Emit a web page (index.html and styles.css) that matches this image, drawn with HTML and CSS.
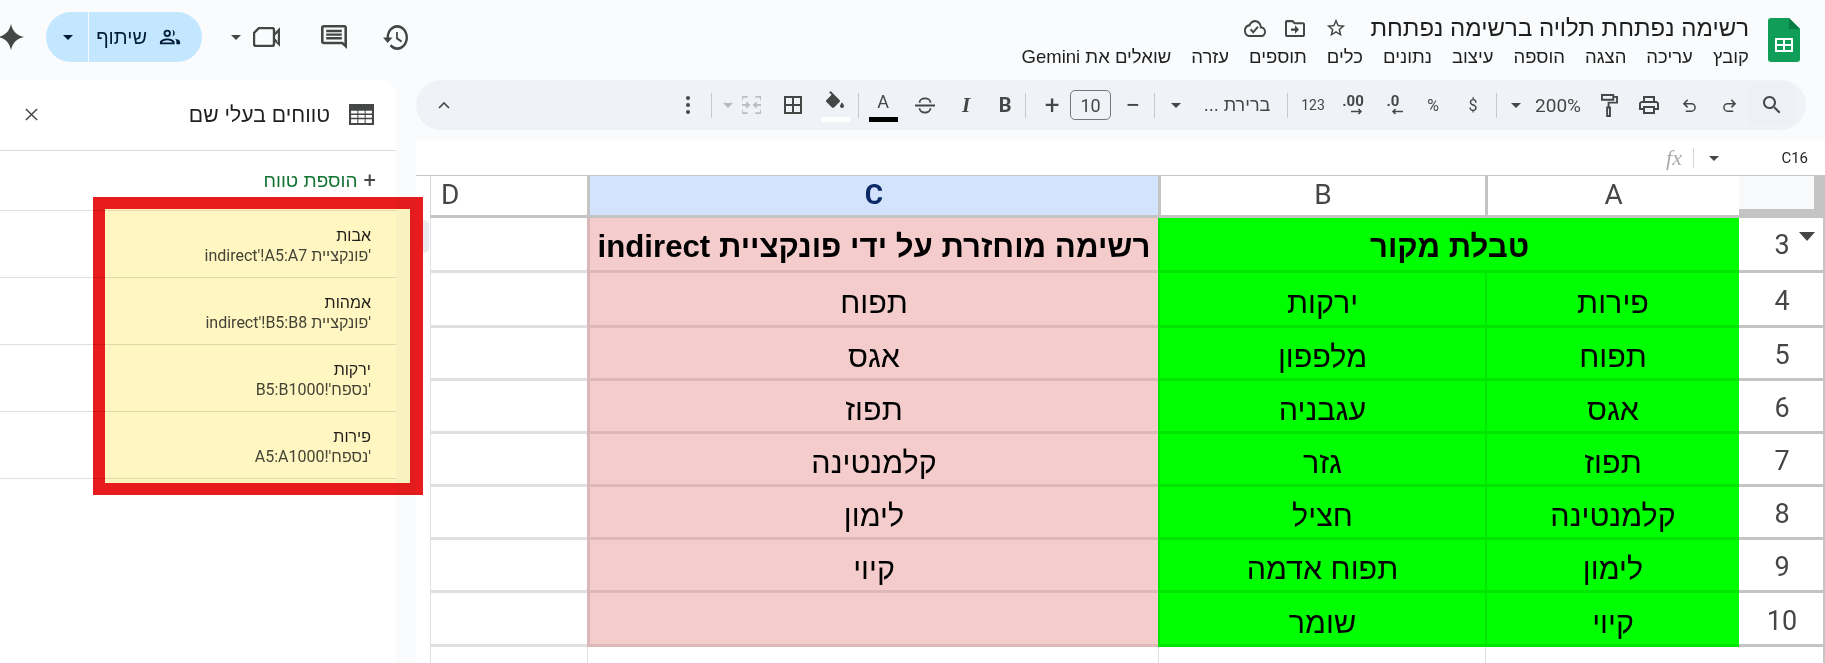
FILE: index.html
```html
<!DOCTYPE html>
<html lang="he" dir="rtl">
<head>
<meta charset="utf-8">
<title>רשימה נפתחת תלויה ברשימה נפתחת</title>
<link rel="stylesheet" href="styles.css">
</head>
<body>
<header class="topbar">
  <svg class="logo" viewBox="0 0 32 44" preserveAspectRatio="none"><path d="M3 0h18l11 11v30a3 3 0 0 1-3 3H3a3 3 0 0 1-3-3V3a3 3 0 0 1 3-3z" fill="#0f9d58"/><path d="M21 0l11 11H21z" fill="#0a7d45"/><path d="M7 20h18v14H7z" fill="#fff"/><path d="M9 22h6v4H9zM17 22h6v4h-6zM9 28h6v4H9zM17 28h6v4h-6z" fill="#0f9d58"/></svg>
  <div class="doc">
    <div class="titlerow">
      <h1 class="title">רשימה נפתחת תלויה ברשימה נפתחת</h1>
      <svg class="ic ic-star" viewBox="0 0 24 24"><path d="M22 9.24l-7.19-.62L12 2 9.19 8.63 2 9.24l5.46 4.73L5.82 21 12 17.27 18.18 21l-1.63-7.03L22 9.24zM12 15.4l-3.76 2.27 1-4.28-3.32-2.88 4.38-.38L12 6.1l1.71 4.04 4.38.38-3.32 2.88 1 4.28L12 15.4z"/></svg>
      <svg class="ic ic-folder" viewBox="2 4 20 16" preserveAspectRatio="none"><path d="M20 6h-8l-2-2H4c-1.1 0-2 .9-2 2v12c0 1.1.9 2 2 2h16c1.1 0 2-.9 2-2V8c0-1.1-.9-2-2-2zm0 12H4V6h5.17l2 2H20v10zm-8-4H8v-2h4V9l4 4-4 4v-3z"/></svg>
      <svg class="ic ic-cloud" viewBox="0 4 24 16" preserveAspectRatio="none"><path d="M19.35 10.04C18.67 6.59 15.64 4 12 4 9.11 4 6.6 5.64 5.35 8.04 2.34 8.36 0 10.91 0 14c0 3.31 2.69 6 6 6h13c2.76 0 5-2.24 5-5 0-2.64-2.05-4.78-4.65-4.96zM19 18H6c-2.21 0-4-1.79-4-4s1.79-4 4-4h.71C7.37 7.69 9.48 6 12 6c3.04 0 5.5 2.46 5.5 5.5v.5H19c1.66 0 3 1.34 3 3s-1.34 3-3 3zm-9-3.82l-2.09-2.09L6.5 13.5 10 17l6.01-6.01-1.41-1.41z"/></svg>
    </div>
    <nav class="menu">
      <span>קובץ</span><span>עריכה</span><span>הצגה</span><span>הוספה</span><span>עיצוב</span><span>נתונים</span><span>כלים</span><span>תוספים</span><span>עזרה</span><span>שואלים את Gemini</span>
    </nav>
  </div>
  <div class="actions">
    <svg class="ic ic-history" viewBox="1 3 21 18" preserveAspectRatio="none"><path d="M13 3c-4.97 0-9 4.03-9 9H1l3.89 3.89.07.14L9 12H6c0-3.87 3.13-7 7-7s7 3.13 7 7-3.13 7-7 7c-1.93 0-3.68-.79-4.94-2.06l-1.42 1.42C8.27 19.99 10.51 21 13 21c4.97 0 9-4.03 9-9s-4.03-9-9-9zm-1 5v5l4.28 2.54.72-1.21-3.5-2.08V8H12z"/></svg>
    <svg class="ic ic-comment" viewBox="2 2 20 20" preserveAspectRatio="none"><path d="M21.99 4c0-1.1-.89-2-1.99-2H4c-1.1 0-2 .9-2 2v12c0 1.1.9 2 2 2h14l4 4-.01-18zM20 4v13.17L18.83 16H4V4h16zM6 12h12v2H6zm0-3h12v2H6zm0-3h12v2H6z"/></svg>
    <div class="meet">
      <svg class="ic ic-video" viewBox="0 0 27 20" preserveAspectRatio="none"><path d="M6 1h13a2 2 0 0 1 2 2v14a2 2 0 0 1-2 2H3a2 2 0 0 1-2-2V6zM21 8l5-5v14l-5-5" fill="none" stroke="#444746" stroke-width="2.4"/></svg>
      <i class="caret"></i>
    </div>
    <div class="share">
      <div class="share-main">
        <svg class="ic ic-people" viewBox="0 0 24 24"><path d="M9 4a4 4 0 1 1 0 8 4 4 0 0 1 0-8zm0 2a2 2 0 1 0 0 4 2 2 0 0 0 0-4zM14.500 4.200a4 4 0 0 1 0 7.600 6 6 0 0 0 1-3.800 6 6 0 0 0-1-3.800zM9 13.500c3 0 8 1.500 8 4V20H1v-2.500c0-2.500 5-4 8-4zm0 2c-2.500 0-5.500 1.200-6 2.500h12c-.5-1.300-3.500-2.500-6-2.500zM17.500 14c2.500.4 5.500 1.600 5.500 3.500V20h-4v-2.500c0-1.400-.6-2.600-1.500-3.500z"/></svg>
        <span>שיתוף</span>
      </div>
      <div class="share-drop"><i class="caret caret-dark"></i></div>
    </div>
    <svg class="ic ic-spark" viewBox="0 0 24 24" preserveAspectRatio="none"><path d="M12 0c1.500 6.500 5 10.500 12 12-7 1.500-10.500 5.500-12 12-1.500-6.500-5-10.500-12-12 7-1.500 10.500-5.500 12-12z"/></svg>
  </div>
</header>

<main class="main">
  <section class="sheet">
    <div class="toolbar">
      <button class="tb w45 tb-search"><svg class="ti" viewBox="3 3 18 18"><path d="M15.5 14h-.79l-.28-.27C15.41 12.59 16 11.11 16 9.5 16 5.91 13.09 3 9.5 3S3 5.91 3 9.5 5.91 16 9.5 16c1.61 0 3.09-.59 4.23-1.57l.27.28v.79l5 4.99L20.49 19l-4.99-5zm-6 0C7.01 14 5 11.99 5 9.5S7.01 5 9.5 5 14 7.01 14 9.5 11.99 14 9.5 14z"/></svg></button>
      <button class="tb w40"><svg class="ti ti-s" viewBox="0 0 16 16" preserveAspectRatio="none"><path d="M6 2L2 6l4 4M2 6h8a4 4 0 0 1 0 8H4" fill="none" stroke="#444746" stroke-width="1.6" transform="matrix(-1 0 0 1 16 0)"/></svg></button>
      <button class="tb w40"><svg class="ti ti-s" viewBox="0 0 16 16" preserveAspectRatio="none"><path d="M6 2L2 6l4 4M2 6h8a4 4 0 0 1 0 8H4" fill="none" stroke="#444746" stroke-width="1.6"/></svg></button>
      <button class="tb w40"><svg class="ti ti-print" viewBox="2 3 20 18" preserveAspectRatio="none"><path d="M19 8h-1V3H6v5H5c-1.66 0-3 1.34-3 3v6h4v4h12v-4h4v-6c0-1.66-1.34-3-3-3zM8 5h8v3H8V5zm8 12v2H8v-4h8v2zm2-2v-2H6v2H4v-4c0-.55.45-1 1-1h14c.55 0 1 .45 1 1v4h-2z"/></svg></button>
      <button class="tb w40"><svg class="ti ti-paint" viewBox="0 0 18 24" preserveAspectRatio="none"><path d="M1 1h12v5H1zM13 3h4v6H8v5M6.500 14h3v9h-3z" fill="none" stroke="#444746" stroke-width="2"/></svg></button>
      <button class="tb w59 zoomtxt">200%</button>
      <button class="tb w22"><i class="caret"></i></button>
      <i class="sep sep-a"></i>
      <button class="tb w40 txt">$</button>
      <button class="tb w40 txt">%</button>
      <button class="tb w40 dec"><span>.0</span><svg class="arrow" viewBox="0 0 12 7"><path d="M12 3.500H2M4.500 1L2 3.500 4.500 6" fill="none" stroke="#444746" stroke-width="1.5"/></svg></button>
      <button class="tb w40 dec"><span>.00</span><svg class="arrow" viewBox="0 0 12 7"><path d="M0 3.500h10M7.500 1L10 3.500 7.500 6" fill="none" stroke="#444746" stroke-width="1.5"/></svg></button>
      <button class="tb w40 txt small">123</button>
      <i class="sep sep-b"></i>
      <button class="tb fontname">ברירת ...</button>
      <button class="tb w22"><i class="caret"></i></button>
      <i class="sep sep-c"></i>
      <button class="tb w36 sign">−</button>
      <div class="sizebox">10</div>
      <button class="tb w36 sign">+</button>
      <i class="sep sep-d"></i>
      <button class="tb w40 bold">B</button>
      <button class="tb w38 ital">I</button>
      <button class="tb w44"><svg class="ti ti-strike" viewBox="0 0 22 18" preserveAspectRatio="none"><path d="M0 9h22M5 6c0-6 12-6 12 0M5 12c0 6 12 6 12 0" fill="none" stroke="#444746" stroke-width="2"/></svg></button>
      <button class="tb w40 color">
        <span class="a-letter">A</span><i class="bar bar-black"></i>
      </button>
      <i class="sep sep-e"></i>
      <button class="tb w40 color">
        <svg class="ti ti-fill" viewBox="3 0 18 17" preserveAspectRatio="none"><path d="M16.560 8.940L7.620 0 6.210 1.410l2.380 2.380-5.150 5.150c-.59.59-.59 1.540 0 2.120l5.500 5.500c.29.29.68.44 1.060.44s.77-.15 1.060-.44l5.500-5.500c.59-.58.59-1.530 0-2.120zM19 11.500s-2 2.170-2 3.500c0 1.100.9 2 2 2s2-.9 2-2c0-1.330-2-3.500-2-3.500z"/></svg>
        <i class="bar bar-white"></i>
      </button>
      <button class="tb w44"><svg class="ti ti-border" viewBox="3 3 18 18" preserveAspectRatio="none"><path d="M3 3v18h18V3H3zm8 16H5v-6h6v6zm0-8H5V5h6v6zm8 8h-6v-6h6v6zm0-8h-6V5h6v6z"/></svg></button>
      <button class="tb w34"><svg class="ti ti-merge" viewBox="0 0 20 20" preserveAspectRatio="none"><path d="M0 5V1h6M0 15v4h6M20 5V1h-6M20 15v4h-6M0 10h7M4.500 7l3 3-3 3M20 10h-7M15.500 7l-3 3 3 3" fill="none" stroke="#bcbfc2" stroke-width="2"/></svg></button>
      <button class="tb w18"><i class="caret caret-off"></i></button>
      <i class="sep sep-f"></i>
      <button class="tb w40 dots"><i></i><i></i><i></i></button>
      <div class="tb-fill"></div>
      <button class="tb w56"><svg class="ti ti-chev" viewBox="0 0 12 8" preserveAspectRatio="none"><path d="M1 7l5-5 5 5" fill="none" stroke="#444746" stroke-width="1.6"/></svg></button>
    </div>

    <div class="formula">
      <span class="cellref">C16</span>
      <i class="caret caret-f"></i>
      <i class="fsep"></i>
      <span class="fx">fx</span>
    </div>

    <div class="grid">
      <div class="corner"></div>
      <div class="ch">A</div>
      <div class="ch">B</div>
      <div class="ch ch-sel">C</div>
      <div class="ch ch-d">D</div>
      <div class="pad"></div>

      <div class="rh rh-3"><span>3</span><i class="rowcaret"></i></div>
      <div class="c g bold span2">טבלת מקור</div>
      <div class="c p bold">רשימה מוחזרת על ידי פונקציית indirect</div>
      <div class="c e"></div>
      <div class="pad"></div>

      <div class="rh">4</div><div class="c g">פירות</div><div class="c g">ירקות</div><div class="c p">תפוח</div><div class="c e"></div><div class="pad"></div>
      <div class="rh">5</div><div class="c g">תפוח</div><div class="c g">מלפפון</div><div class="c p">אגס</div><div class="c e"></div><div class="pad"></div>
      <div class="rh">6</div><div class="c g">אגס</div><div class="c g">עגבניה</div><div class="c p">תפוז</div><div class="c e"></div><div class="pad"></div>
      <div class="rh">7</div><div class="c g">תפוז</div><div class="c g">גזר</div><div class="c p">קלמנטינה</div><div class="c e"></div><div class="pad"></div>
      <div class="rh">8</div><div class="c g">קלמנטינה</div><div class="c g">חציל</div><div class="c p">לימון</div><div class="c e"></div><div class="pad"></div>
      <div class="rh">9</div><div class="c g">לימון</div><div class="c g">תפוח אדמה</div><div class="c p">קיוי</div><div class="c e"></div><div class="pad"></div>
      <div class="rh">10</div><div class="c g">קיוי</div><div class="c g">שומר</div><div class="c p"></div><div class="c e"></div><div class="pad"></div>
      <div class="rh rh-11">11</div><div class="c e"></div><div class="c e"></div><div class="c e"></div><div class="c e"></div><div class="pad"></div>
    </div>
  </section>

  <aside class="panel">
    <div class="panel-head">
      <svg class="ic ic-table" viewBox="0 0 24 22" preserveAspectRatio="none"><path d="M0 0h24v22H0z" fill="#444746"/><path d="M2 7h6v3H2zM9 7h6v3H9zM16 7h6v3h-6zM2 11.500h6v3H2zM9 11.500h6v3H9zM16 11.500h6v3h-6zM2 16h6v4H2zM9 16h6v4H9zM16 16h6v4h-6z" fill="#fff"/></svg>
      <h2 class="panel-title">טווחים בעלי שם</h2>
      <svg class="ic ic-close" viewBox="0 0 14 14" preserveAspectRatio="none"><path d="M1 1l12 12M13 1L1 13" fill="none" stroke="#444746" stroke-width="1.6"/></svg>
    </div>
    <div class="add"><span class="plus">+</span><span>הוספת טווח</span></div>
    <ul class="ranges">
      <li><strong>אבות</strong><span>'פונקציית indirect'!A5:A7</span></li>
      <li><strong>אמהות</strong><span>'פונקציית indirect'!B5:B8</span></li>
      <li><strong>ירקות</strong><span>'נספח'!B5:B1000</span></li>
      <li><strong>פירות</strong><span>'נספח'!A5:A1000</span></li>
    </ul>
  </aside>
</main>

<div class="thumb"></div>
<div class="callout"></div>
</body>
</html>
```
FILE: styles.css
```css
* { box-sizing: border-box; }
html, body { margin: 0; height: 100%; }
body {
  width: 1825px;
  height: 663px;
  overflow: hidden;
  position: relative;
  background: #f9fbfd;
  color: #1f1f1f;
  font-family: Roboto, "Liberation Sans", sans-serif;
}
h1, h2, ul { margin: 0; padding: 0; font-weight: normal; }
.ic { display: block; fill: #444746; flex: none; }
i { display: block; font-style: normal; }

.topbar { height: 80px; display: flex; align-items: flex-start; padding-right: 25px; }
.logo { width: 32px; height: 44px; margin-top: 18px; flex: none; }
.doc { margin-right: 19px; width: 740px; flex: none; }
.titlerow { display: flex; align-items: center; height: 32px; margin-top: 12px; }
.title { font-family: "Liberation Sans", sans-serif; font-size: 24px; color: #1f1f1f; white-space: nowrap; }
.ic-star { width: 22px; height: 22px; margin-right: 23px; }
.ic-folder { width: 20px; height: 17px; margin-right: 20px; }
.ic-cloud { width: 22px; height: 17px; margin-right: 19px; }
.menu { display: flex; gap: 20px; height: 24px; margin-top: 1px; align-items: center; font-size: 18.500px; font-family: "Liberation Sans", sans-serif; white-space: nowrap; }
.actions { flex: 1; display: flex; align-items: center; justify-content: flex-end; height: 74px; }
.ic-history { width: 25px; height: 25px; }
.ic-comment { width: 26px; height: 24px; margin-right: 36px; }
.meet { display: flex; align-items: center; gap: 12px; margin-right: 41px; }
.ic-video { width: 27px; height: 20px; }
.caret { width: 0; height: 0; border-left: 5px solid transparent; border-right: 5px solid transparent; border-top: 5px solid #444746; }
.caret-dark { border-top-color: #001d35; }
.caret-off { border-top-color: #b9bcbf; }
.share { display: flex; width: 156px; height: 50px; margin-right: 29px; border-radius: 25px; background: #c2e7ff; color: #001d35; overflow: hidden; flex: none; }
.share-main { flex: 1; display: flex; align-items: center; gap: 12px; padding-right: 21px; font-size: 20px; border-left: 1px solid #f3fbff; font-family: "Liberation Sans", sans-serif; }
.ic-people { width: 22px; height: 22px; fill: #001d35; }
.share-drop { width: 42px; display: flex; align-items: center; justify-content: center; padding-left: 2px; }
.ic-spark { width: 26px; height: 26px; margin-right: 22px; margin-left: -2px; }

.main { height: 583px; display: flex; gap: 20px; }
.sheet { width: 1409px; flex: none; display: flex; flex-direction: column; }
.panel { width: 396px; flex: none; background: #fff; border-top-right-radius: 16px; }

.toolbar { height: 50px; width: 1390px; margin-right: 19px; flex: none; background: #eff3f8; border-radius: 25px; display: flex; align-items: center; padding-right: 12px; }
.tb { height: 40px; border: 0; padding: 0; margin: 0; background: none; flex: none; display: flex; flex-direction: column; align-items: center; justify-content: center; color: #444746; font-family: Roboto, "Liberation Sans", sans-serif; font-size: 15px; }
.tb-search { background: #edf1f7; }
.w18 { width: 18px; } .w22 { width: 22px; } .w34 { width: 34px; } .w36 { width: 36px; } .w38 { width: 38px; } .w40 { width: 40px; }
.w44 { width: 44px; } .w45 { width: 45px; } .w56 { width: 56px; } .w59 { width: 62px; }
.tb-fill { flex: 1; }
.ti { display: block; fill: #444746; }
.tb-search .ti { width: 18px; height: 18px; }
.ti-s { width: 15px; height: 15px; }
.ti-print { width: 20px; height: 18px; }
.ti-paint { width: 17px; height: 23px; }
.zoomtxt { font-size: 19px; }
.txt { font-size: 16px; }
.txt.small { font-size: 14px; }
.dec { font-size: 15px; font-weight: 700; line-height: 13px; direction: ltr; }
.arrow { width: 12px; height: 7px; display: block; margin-left: 8px; }
.sep { width: 1px; height: 25px; background: #c7c9cc; flex: none; }
.sep-a { margin: 0 8px 0 3px; }
.sep-b { margin: 0 5px 0 0; }
.sep-c { margin: 0 10px 0 3px; }
.sep-d { margin: 0 8px 0 0; }
.sep-e { margin: 0 4px 0 3px; }
.sep-f { margin: 0 7px 0 3px; }
.fontname { width: 100px; font-size: 18px; font-family: "Liberation Sans", sans-serif; }
.sizebox { width: 41px; height: 30px; margin-right: 4px; border: 1px solid #747775; border-radius: 5px; color: #444746; font-size: 18px; display: flex; align-items: center; justify-content: center; flex: none; }
.sign { font-size: 26px; font-weight: 400; }
.bold { font-weight: 700; font-size: 20px; }
.ital { font-family: "Liberation Serif", serif; font-weight: 700; font-style: italic; font-size: 21px; }
.ti-strike { width: 20px; height: 17px; }
.color { position: relative; }
.a-letter { font-size: 18px; line-height: 18px; margin-top: -7px; }
.bar { position: absolute; bottom: 3px; left: 6px; width: 29px; height: 5px; }
.bar-black { background: #000; }
.bar-white { background: #fff; }
.ti-fill { width: 18px; height: 17px; margin-top: -12px; }
.ti-border { width: 18px; height: 18px; }
.ti-merge { width: 19px; height: 18px; margin-right: 5px; }
.dots { gap: 3px; }
.dots i { width: 4px; height: 4px; border-radius: 50%; background: #444746; }
.ti-chev { width: 12px; height: 8px; }

.formula { height: 35px; flex: none; margin-top: 10px; background: #fff; display: flex; align-items: center; }
.cellref { font-size: 15px; width: 89px; margin-right: 17px; color: #1f1f1f; }
.caret-f { margin-left: 15px; margin-top: 1px; }
.fsep { width: 1px; height: 20px; background: #d5d7d9; margin-left: 11px; }
.fx { font-family: "Liberation Serif", serif; font-style: italic; color: #a9acaf; font-size: 22px; }

.grid { flex: 1; display: grid; overflow: hidden; background: #fff; border-top: 1px solid #c4c7c9; grid-template-columns: 86px 254px 327px 571px 157px 14px; grid-template-rows: 42px 55px 55px 53px 53px 53px 53px 53px 54px 40px; font-family: "Liberation Sans", sans-serif; }
.corner { background: #f8f9fa; border-right: 11px solid #c4c4c4; border-bottom: 9px solid #c4c4c4; }
.ch { display: flex; align-items: center; justify-content: center; background: #fff; color: #444746; font-family: Roboto, sans-serif; font-size: 28px; border-left: 3px solid #c4c4c4; border-bottom: 3px solid #c4c4c4; padding-bottom: 2px; }
.ch-sel { background: #d3e3fd; color: #0b2a66; font-weight: 700; }
.ch-d { justify-content: flex-end; padding-left: 10px; border-left: 1px solid #d5d5d5; }
.rh { position: relative; display: flex; align-items: center; justify-content: center; background: #fff; color: #444746; font-family: Roboto, sans-serif; font-size: 27px; border-right: 2px solid #c4c4c4; border-bottom: 3px solid #c4c4c4; padding-left: 2px; padding-top: 4px; }
.rh-3 { padding-top: 2px; }
.rowcaret { position: absolute; left: 60px; top: 14px; width: 0; height: 0; border-left: 8px solid transparent; border-right: 8px solid transparent; border-top: 9px solid #444746; }
.rh-11 { align-items: flex-start; padding-top: 14px; border-bottom: 0; }
.c { display: flex; align-items: center; justify-content: center; font-size: 30.500px; color: #000; white-space: nowrap; padding-top: 7px; }
.c.bold { font-weight: 700; font-size: 31.200px; padding-top: 5px; }
.span2 { grid-column: span 2; }
.g { background: #0f0; border-left: 2px solid #00e600; border-bottom: 3px solid #00e600; }
.p { background: #f4cccc; border-left: 3px solid #d9b8b8; border-bottom: 3px solid #dcb8b8; }
.e { background: #fff; border-left: 1px solid #e0e0e0; border-bottom: 3px solid #e0e0e0; }
.pad { background: #fff; }

.panel-head { height: 71px; display: flex; align-items: center; padding: 0 22px 1px 25px; border-bottom: 1px solid #dadce0; }
.ic-table { width: 25px; height: 21px; }
.panel-title { flex: 1; margin-right: 19px; font-size: 21.200px; font-family: "Liberation Sans", sans-serif; color: #1f1f1f; }
.ic-close { width: 13px; height: 13px; }
.add { height: 60px; display: flex; align-items: center; padding-right: 20px; color: #137333; font-size: 19px; font-family: "Liberation Sans", sans-serif; border-bottom: 1px solid #e0e0e0; }
.plus { color: #444746; font-size: 22px; margin-left: 6px; font-family: Roboto, sans-serif; }
.ranges { list-style: none; }
.ranges li { height: 67px; padding: 15px 25px 0 0; border-bottom: 1px solid #e0e0e0; display: flex; flex-direction: column; gap: 0; }
.ranges strong { font-weight: 500; font-size: 16px; line-height: 20px; color: #1f1f1f; font-family: Roboto, sans-serif; }
.ranges span { font-size: 16px; line-height: 20px; color: #444746; }

.thumb { position: absolute; left: 423px; top: 220px; width: 6px; height: 33px; border-radius: 0 5px 5px 0; background: #e8eaed; }
.callout { position: absolute; left: 93px; top: 197px; width: 330px; height: 298px; border: solid #e81c1c; border-width: 12px 13px 12px 12px; background: #fff6c2; mix-blend-mode: multiply; }
```
